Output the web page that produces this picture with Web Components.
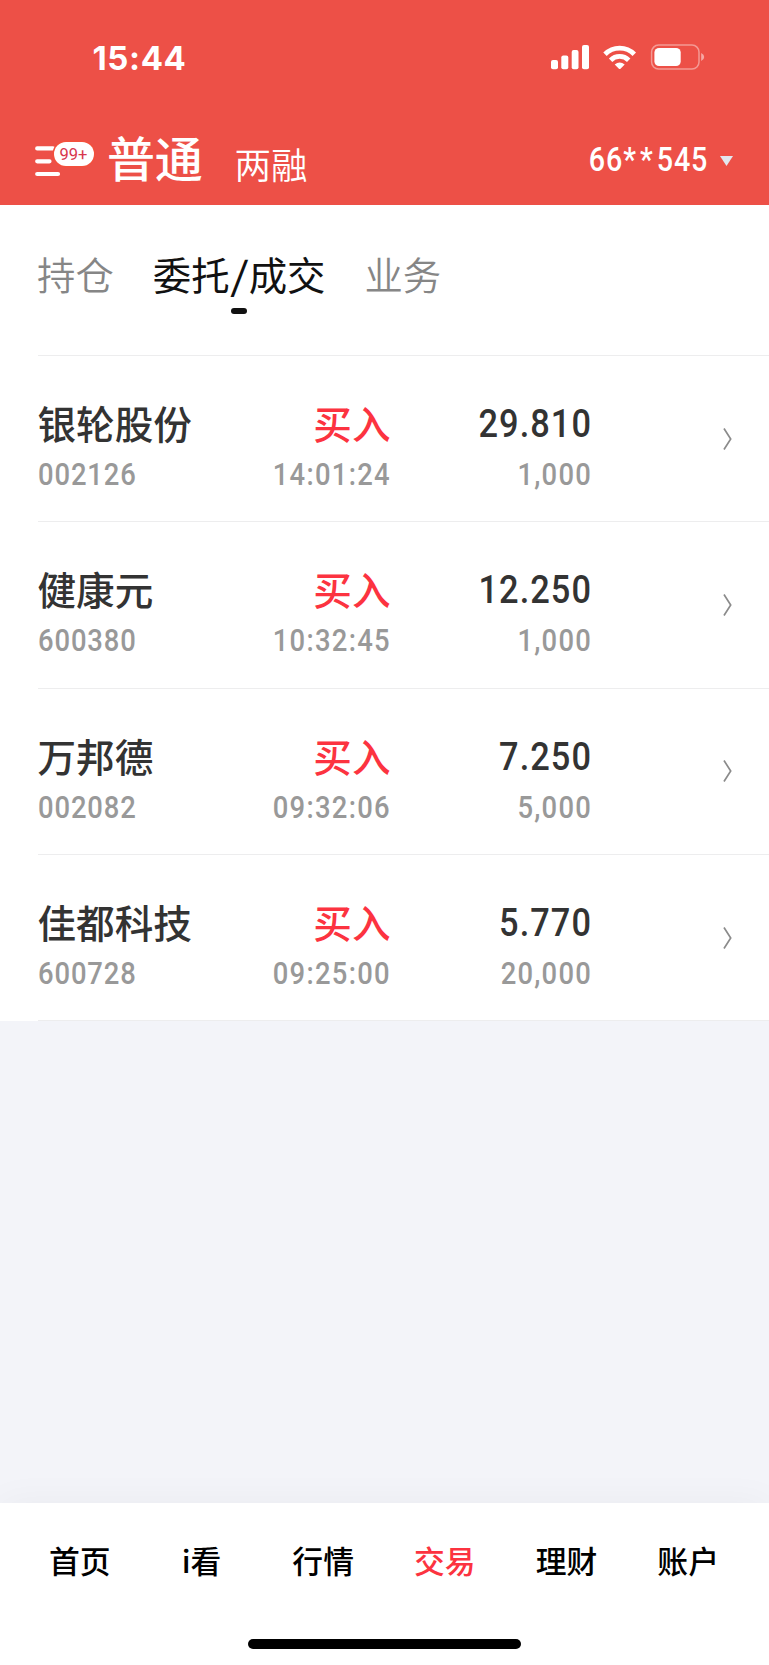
<!DOCTYPE html>
<html lang="zh-CN">
<head>
<meta charset="UTF-8">
<meta name="viewport" content="width=device-width, initial-scale=1">
<title>委托/成交</title>
<style>
  body {
    margin: 0;
    background: #f3f4f9;
    font-family: "Noto Sans CJK SC", sans-serif;
  }
</style>
</head>
<body>
<trade-app></trade-app>

<script>
class StatusBar extends HTMLElement {
  constructor() {
    super();
    this.shadowDOM = this.attachShadow({mode: 'open'});
    this.shadowDOM.innerHTML = `
      <style>
        :host {
          display: flex;
          justify-content: space-between;
          align-items: center;
          height: 34px;
          padding: 40px 64px 0 92.5px;
          color: #fff;
        }
        .time {
          font: 750 33px/34px Inter, sans-serif;
          letter-spacing: 0.6px;
          padding-top: 1px;
        }
        svg { display: block; }
      </style>
      <span class="time"><slot></slot></span>
      <svg width="154" height="26" viewBox="551 44 154 26" fill="#fff">
        <rect x="551" y="60" width="7" height="9.3" rx="2"/>
        <rect x="561.3" y="55.5" width="7" height="13.8" rx="2"/>
        <rect x="571.7" y="50" width="6.8" height="19.3" rx="2"/>
        <rect x="582" y="45" width="7" height="24.3" rx="2"/>
        <g fill="none" stroke="#fff" stroke-width="4.8">
          <path d="M605 54.3A20.5 20.5 0 0 1 634.3 54.3"/>
          <path d="M610.6 60.2A12.8 12.8 0 0 1 628.7 60.2"/>
        </g>
        <path d="M614.7 64.5Q619.7 60.3 624.7 64.5L620.5 68.7Q619.7 69.5 618.9 68.7Z"/>
        <rect x="651.6" y="45.1" width="47.4" height="23.9" rx="7" fill="none" stroke="#fff" stroke-opacity=".42" stroke-width="1.5"/>
        <rect x="654.4" y="48" width="26.3" height="18" rx="4.6"/>
        <path d="M701.2 53Q704.2 54.3 704.2 57T701.2 61Z" fill-opacity=".5"/>
      </svg>
    `;
  }
}

class AppHeader extends HTMLElement {
  constructor() {
    super();
    this.shadowDOM = this.attachShadow({mode: 'open'});
    this.shadowDOM.innerHTML = `
      <style>
        :host {
          display: block;
          height: 205px;
          background: #ed5047;
          color: #fff;
        }
        .bar {
          display: flex;
          align-items: flex-start;
          padding: 50px 36px 0 35px;
        }
        .menu {
          position: relative;
          width: 60px;
          height: 40px;
          margin: 18px 12px 0 0;
        }
        .menu svg { display: block; }
        .badge {
          position: absolute;
          left: 18.5px;
          top: 0;
          width: 40px;
          height: 24px;
          border-radius: 12px;
          background: #fff;
          box-shadow: 0 0 0 1.5px #f4503c;
          color: #d8374d;
          font: 400 16.5px/26px Roboto, sans-serif;
          text-align: center;
        }
        h1 {
          margin: 0;
          font-size: 48px;
          line-height: 64px;
          font-weight: 500;
          letter-spacing: -0.3px;
        }
        .second {
          margin: 15px 0 0 32px;
          font-size: 36.5px;
          line-height: 50px;
          font-weight: 350;
        }
        .account {
          margin: 16px 12px 0 auto;
          font: 500 33px/40px Roboto, sans-serif;
          letter-spacing: 1px;
          transform: scaleX(.87);
          transform-origin: right;
        }
        .mask { letter-spacing: 4.6px; }
        .arrow {
          width: 13px;
          height: 10px;
          margin-top: 32px;
          background: #e2e7ef;
          clip-path: polygon(0 0, 100% 0, 50% 100%);
        }
      </style>
      <status-bar>15:44</status-bar>
      <div class="bar">
        <div class="menu">
          <svg width="26" height="35" viewBox="0 0 26 35" stroke="#fff" stroke-width="4.2" stroke-linecap="round">
            <path d="M2.2 6.4H18M2.2 19.3H14.5M2.2 32H23"/>
          </svg>
          <span class="badge">99+</span>
        </div>
        <h1>普通</h1>
        <span class="second">两融</span>
        <span class="account">66<span class="mask">**</span>545</span>
        <span class="arrow"></span>
      </div>
    `;
  }
}

class TabItem extends HTMLElement {
  constructor() {
    super();
    this.shadowDOM = this.attachShadow({mode: 'open'});
    this.shadowDOM.innerHTML = `
      <style>
        :host {
          display: flex;
          flex-direction: column;
          align-items: center;
          color: #868686;
          font-size: 38.4px;
          line-height: 56px;
          font-weight: 350;
        }
        :host([active]) {
          color: #111;
          font-weight: 400;
        }
        :host([active])::after {
          content: "";
          width: 16px;
          height: 6.5px;
          margin-top: 6.5px;
          border-radius: 3px;
          background: #111;
        }
        ::slotted(i) {
          display: inline-block;
          font-style: normal;
          padding: 0 2px;
          transform: scaleX(1.25);
        }
      </style>
      <div><slot></slot></div>
    `;
  }
}

class TabBar extends HTMLElement {
  constructor() {
    super();
    this.shadowDOM = this.attachShadow({mode: 'open'});
    this.shadowDOM.innerHTML = `
      <style>
        :host {
          display: flex;
          align-items: flex-start;
          gap: 39px;
          box-sizing: border-box;
          height: 150px;
          padding: 40px 0 0 37px;
          background: #fff;
        }
      </style>
      <slot></slot>
    `;
  }
}

class OrderItem extends HTMLElement {
  constructor() {
    super();
    this.shadowDOM = this.attachShadow({mode: 'open'});
  }

  set order(order) {
    this._order = order;
    this.render();
  }

  render() {
    this.shadowDOM.innerHTML = `
      <style>
        :host {
          display: grid;
          grid-template-columns: 160px 193px 201px 1fr;
          grid-template-rows: 56px 40px;
          row-gap: 5px;
          box-sizing: border-box;
          height: 166.35px;
          margin-left: 37.5px;
          padding: 38px 36.5px 0 0;
          border-top: 1.5px solid #ededee;
        }
        .name, .side {
          font-size: 38.6px;
          line-height: 56px;
          font-weight: 500;
          color: #333;
          white-space: nowrap;
        }
        .side { color: #fc3340; }
        .num {
          font: 500 31.5px/40px Roboto, sans-serif;
          letter-spacing: 1px;
          color: #999;
          transform: scaleX(.87);
          transform-origin: left;
        }
        .time { letter-spacing: 1.5px; }
        .amount { letter-spacing: 1.4px; }
        .price {
          font-size: 39.5px;
          line-height: 60px;
          letter-spacing: 1.2px;
          color: #333;
        }
        .right {
          text-align: right;
          transform-origin: right;
        }
        .chevron {
          grid-column: 4;
          grid-row: 1 / 3;
          justify-self: end;
          margin: 32.5px 1px 0 0;
        }
      </style>
      <span class="name">${this._order.name}</span>
      <span class="side right">${this._order.side}</span>
      <span class="num price right">${this._order.price}</span>
      <span class="num">${this._order.code}</span>
      <span class="num time right">${this._order.time}</span>
      <span class="num amount right">${this._order.amount}</span>
      <svg class="chevron" width="9" height="24" viewBox="0 0 9 24" fill="none" stroke="#8b8b8b" stroke-width="1.7">
        <path d="M1 1.5L7.7 12L1 22.5"/>
      </svg>
    `;
  }
}

class OrderList extends HTMLElement {
  constructor() {
    super();
    this.shadowDOM = this.attachShadow({mode: 'open'});
    this.shadowDOM.innerHTML = `
      <style>
        :host {
          display: block;
          background: #fff;
        }
        .end {
          height: 1px;
          margin-left: 37.5px;
          background: #ededee;
        }
      </style>
    `;
  }

  set orders(orders) {
    orders.forEach(order => {
      const item = document.createElement('order-item');
      item.order = order;
      this.shadowDOM.appendChild(item);
    });
    const end = document.createElement('div');
    end.className = 'end';
    this.shadowDOM.appendChild(end);
  }
}

class BottomNav extends HTMLElement {
  constructor() {
    super();
    this.shadowDOM = this.attachShadow({mode: 'open'});
    this.shadowDOM.innerHTML = `
      <style>
        :host {
          display: flex;
          flex-direction: column;
          align-items: center;
          justify-content: space-between;
          box-sizing: border-box;
          height: 162px;
          padding: 35px 20px 16px 19px;
          background: #fff;
          box-shadow: 0 0 36px rgba(0, 0, 0, .045);
        }
        nav {
          display: grid;
          grid-template-columns: repeat(6, 1fr);
          align-self: stretch;
          font-size: 30.8px;
          line-height: 44px;
          font-weight: 500;
          text-align: center;
          color: #000;
        }
        ::slotted(.active) { color: #fc3340; }
        .home {
          width: 273px;
          height: 10px;
          border-radius: 5px;
          background: #000;
        }
      </style>
      <nav><slot></slot></nav>
      <div class="home"></div>
    `;
  }
}

class TradeApp extends HTMLElement {
  constructor() {
    super();
    this.shadowDOM = this.attachShadow({mode: 'open'});
    this.shadowDOM.innerHTML = `
      <style>
        :host {
          display: flex;
          flex-direction: column;
          height: 1665px;
          overflow: hidden;
        }
        bottom-nav { margin-top: auto; }
      </style>
      <app-header></app-header>
      <tab-bar>
        <tab-item>持仓</tab-item>
        <tab-item active>委托<i>/</i>成交</tab-item>
        <tab-item>业务</tab-item>
      </tab-bar>
      <order-list></order-list>
      <bottom-nav>
        <span>首页</span>
        <span>i看</span>
        <span>行情</span>
        <span class="active">交易</span>
        <span>理财</span>
        <span>账户</span>
      </bottom-nav>
    `;
    this.shadowDOM.querySelector('order-list').orders = [
      {name: '银轮股份', code: '002126', side: '买入', time: '14:01:24', price: '29.810', amount: '1,000'},
      {name: '健康元', code: '600380', side: '买入', time: '10:32:45', price: '12.250', amount: '1,000'},
      {name: '万邦德', code: '002082', side: '买入', time: '09:32:06', price: '7.250', amount: '5,000'},
      {name: '佳都科技', code: '600728', side: '买入', time: '09:25:00', price: '5.770', amount: '20,000'}
    ];
  }
}

customElements.define('status-bar', StatusBar);
customElements.define('app-header', AppHeader);
customElements.define('tab-item', TabItem);
customElements.define('tab-bar', TabBar);
customElements.define('order-item', OrderItem);
customElements.define('order-list', OrderList);
customElements.define('bottom-nav', BottomNav);
customElements.define('trade-app', TradeApp);
</script>
</body>
</html>
